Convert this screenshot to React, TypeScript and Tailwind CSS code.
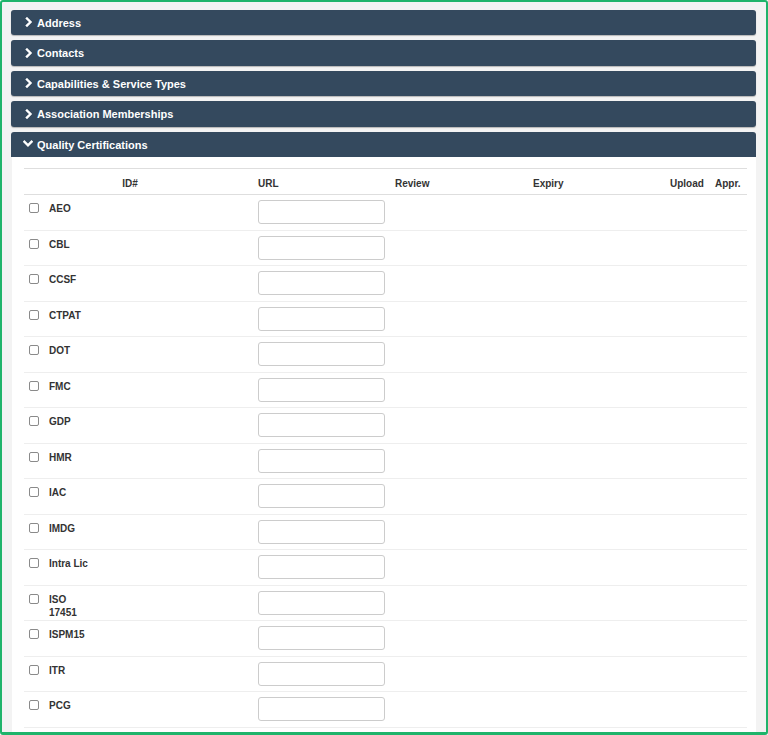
const sections = ["Address", "Contacts", "Capabilities & Service Types", "Association Memberships"];

const certs = [
  "AEO",
  "CBL",
  "CCSF",
  "CTPAT",
  "DOT",
  "FMC",
  "GDP",
  "HMR",
  "IAC",
  "IMDG",
  "Intra Lic",
  "ISO 17451",
  "ISPM15",
  "ITR",
  "PCG",
];

function Chevron({ down = false }: { down?: boolean }) {
  if (down) {
    return (
      <svg width="10" height="8" viewBox="0 0 10 8" className="shrink-0">
        <polyline points="1.5,1.8 5,5.3 8.5,1.8" fill="none" stroke="#fff" strokeWidth="2.4" strokeLinecap="square" />
      </svg>
    );
  }
  return (
    <svg width="8" height="10" viewBox="0 0 8 10" className="shrink-0">
      <polyline points="2,1.5 5.5,5 2,8.5" fill="none" stroke="#fff" strokeWidth="2.4" strokeLinecap="square" />
    </svg>
  );
}

function SectionHeader({ title }: { title: string }) {
  return (
    <div className="flex h-[25.5px] items-center gap-[4px] rounded-[3px] bg-[#34495e] pl-[14px] shadow-[0_1px_1px_rgba(0,0,0,0.25)]">
      <Chevron />
      <span className="mt-[1px] text-[11px] font-bold text-white">{title}</span>
    </div>
  );
}

export default function App() {
  return (
    <div
      className="h-[735px] w-[768px] overflow-hidden rounded-[3px] border-[2px] border-b-[3px] border-[#1fb46b] bg-[#f3f3f3] pl-[9px] pr-[10px] pt-[7.5px]"
      style={{ fontFamily: "'Liberation Sans', Arial, sans-serif" }}
    >
      <div className="flex flex-col gap-[5px]">
        {sections.map((s) => (
          <SectionHeader key={s} title={s} />
        ))}

        {/* Quality Certifications (open) */}
        <div className="flex flex-col">
          <div className="flex h-[25.5px] items-center gap-[4px] rounded-t-[3px] bg-[#34495e] pl-[12px]">
            <Chevron down />
            <span className="mt-[1px] text-[11px] font-bold text-white">Quality Certifications</span>
          </div>

          <div className="ml-[1px] bg-white pb-10 pl-[12px] pr-[9px] pt-[11px]">
            <div className="border-y border-[#dedede] text-[10px] font-bold text-[#333]">
              <div className="flex h-[25px] items-center pt-[4px]">
                <div className="w-[212px] text-center">ID#</div>
                <div className="w-[159px] pl-[22px]">URL</div>
                <div className="w-[138px]">Review</div>
                <div className="w-[137px]">Expiry</div>
                <div className="w-[45px]">Upload</div>
                <div>Appr.</div>
              </div>
            </div>

            {certs.map((c) => (
              <div key={c} className="flex h-[35.5px] items-start border-b border-[#eeeeee] pt-[5px]">
                <div className="flex w-[234px] items-start pl-[5px]">
                  <span className="mt-[3px] h-[10px] w-[10px] shrink-0 rounded-[2px] border border-[#8a8a8a] bg-white" />
                  <span className="ml-[10px] mt-[2px] w-[44px] text-[10px] font-bold leading-[13px] text-[#333]">
                    {c}
                  </span>
                </div>
                <input
                  type="text"
                  className="h-[24px] w-[127px] rounded-[3px] border border-[#cccccc] bg-white outline-none"
                />
              </div>
            ))}
          </div>
        </div>
      </div>
    </div>
  );
}
